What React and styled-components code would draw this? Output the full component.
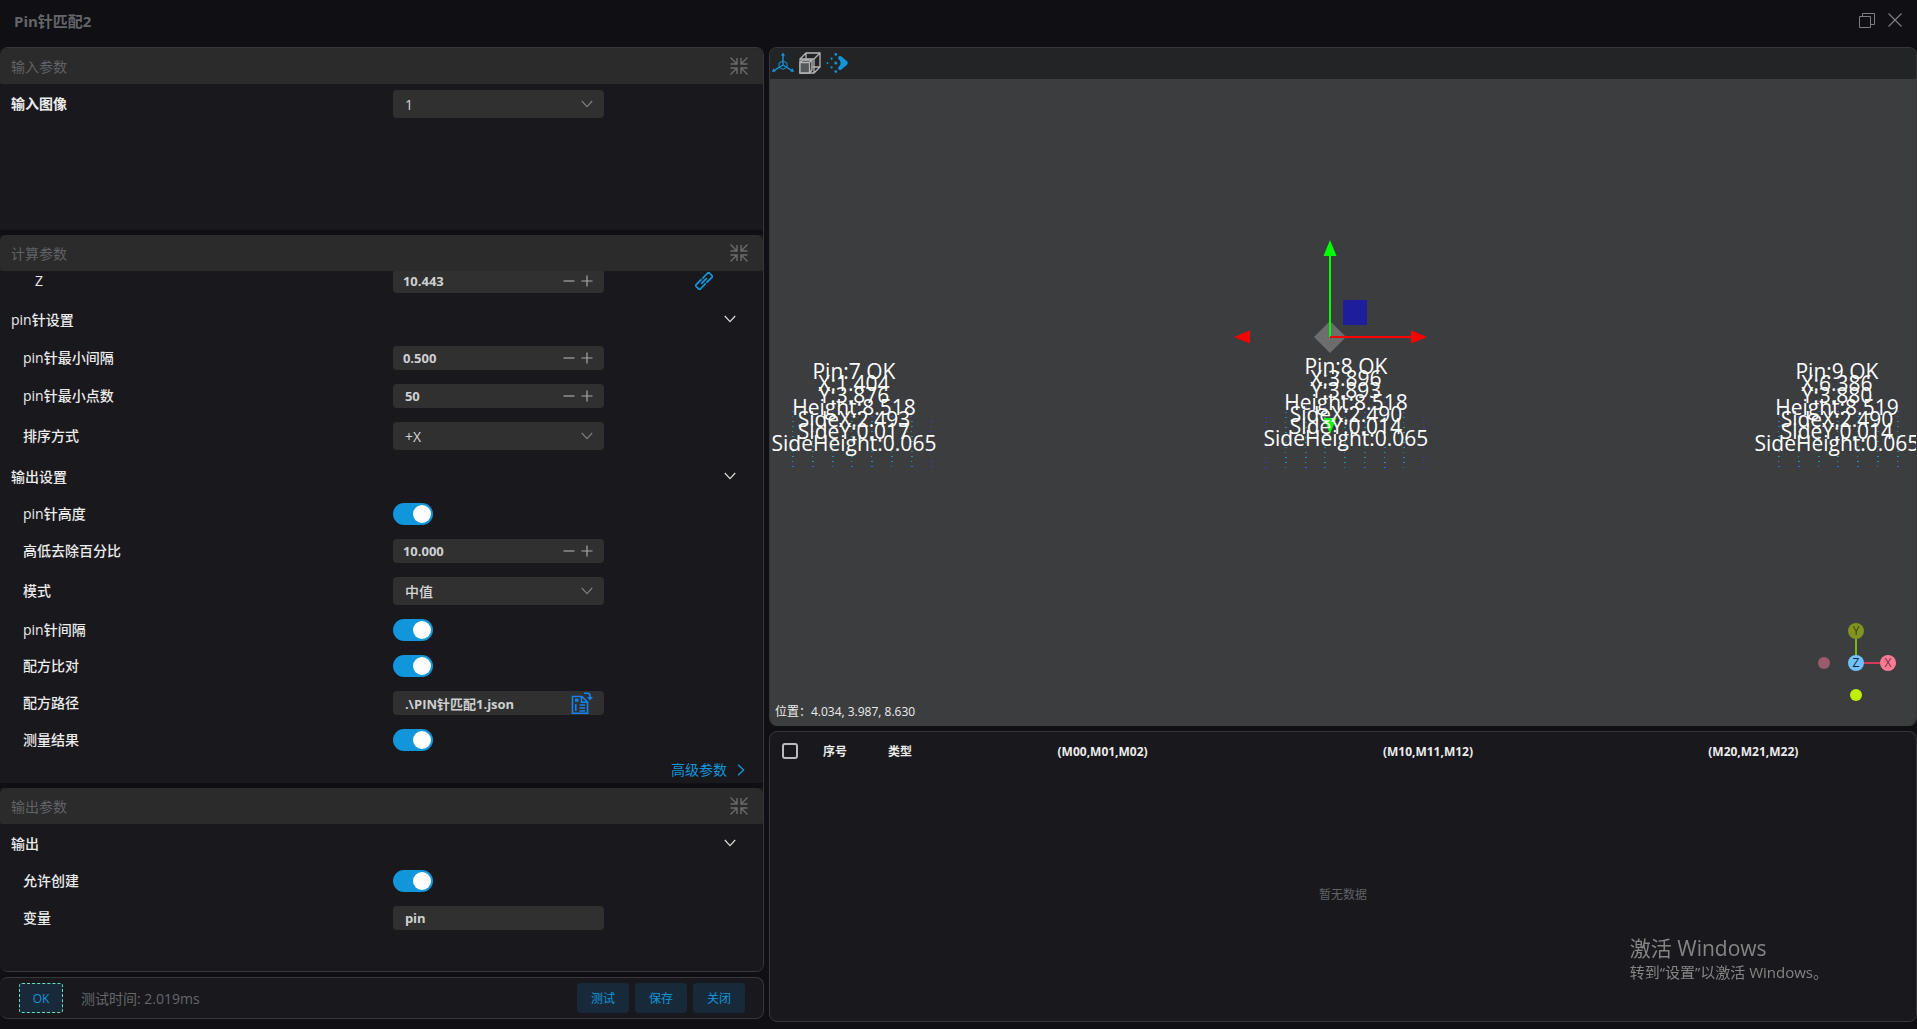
import { useState } from "react";
import styled, { createGlobalStyle } from "styled-components";

const GlobalStyle = createGlobalStyle`
  * {
    box-sizing: border-box;
  }
  body {
    margin: 0;
    background-color: #0f0f14;
    color: #ececec;
    font-family: "Open Sans", "Noto Sans CJK SC", sans-serif;
    font-size: 14px;
  }
  button, input, select {
    font-family: inherit;
  }
`;

const Page = styled.div`
  height: 100vh;
  display: flex;
  flex-direction: column;
  overflow: hidden;
`;
const TitleBar = styled.header`
  height: 47px;
  padding: 0 14px 7px;
  display: flex;
  align-items: center;
  justify-content: space-between;
`;
const Title = styled.h1`
  margin: 0;
  font-size: 15px;
  font-weight: 700;
  color: #646669;
`;
const WindowButtons = styled.div`
  display: flex;
  gap: 12px;
`;
const IconButton = styled.button`
  display: flex;
  padding: 0;
  border: none;
  background: none;
  color: ${(props) => props.$color || "#7d7e80"};
  cursor: pointer;
`;
const Main = styled.main`
  flex: 1;
  min-height: 0;
  display: grid;
  grid-template-columns: 39.85% 1fr;
  gap: 5px;
`;
const Column = styled.div`
  min-width: 0;
  min-height: 0;
  display: flex;
  flex-direction: column;
  gap: 5px;
`;
const LeftColumn = styled(Column)`
  padding-bottom: 10px;
`;
const RightColumn = styled(Column)`
  padding-bottom: 7px;
`;

// parameters
const Stack = styled.div`
  flex: 1;
  min-height: 0;
  display: flex;
  flex-direction: column;
  gap: 5px;
  border: 1px solid #38383c;
  border-left: none;
  border-radius: 8px;
  overflow: hidden;
`;
const Section = styled.section`
  flex: ${(props) => props.$grow} 1 0;
  min-height: 0;
  display: flex;
  flex-direction: column;
  background-color: #19181d;
`;
const SectionHeader = styled.div`
  height: 36px;
  flex-shrink: 0;
  padding: 0 15px 0 11px;
  display: flex;
  align-items: center;
  justify-content: space-between;
  border-radius: 6px 6px 2px 2px;
  background-color: #2b2b2b;
`;
const SectionTitle = styled.h2`
  margin: 0;
  font-size: 14px;
  font-weight: 400;
  color: #606266;
`;
const SectionBody = styled.div`
  flex: 1;
  min-height: 0;
  overflow: hidden;
  padding-top: ${(props) => props.$top || 0}px;
`;
const Rows = styled.div`
  display: flex;
  flex-direction: column;
  gap: 14px;
  margin-top: ${(props) => (props.$scrolled ? "-2px" : "0")};
`;
const Row = styled.div`
  display: grid;
  grid-template-columns: 51.5% 27.7% 1fr;
  align-items: center;
`;
const Label = styled.label`
  padding-left: ${(props) => 11 + (props.$level || 0) * 12}px;
  line-height: 20px;
  font-weight: ${(props) => (props.$strong ? 700 : 500)};
`;
const GroupHeader = styled.div`
  height: 25px;
  padding: 0 27px 2px 11px;
  display: flex;
  align-items: center;
  justify-content: space-between;
  font-weight: 500;
`;
const Field = styled.div`
  position: relative;
  height: ${(props) => (props.$tall ? 28 : 24)}px;
  display: flex;
  align-items: center;
  gap: 6px;
  padding-right: ${(props) => (props.$tall ? 0 : 11)}px;
  border-radius: 4px;
  background-color: #303031;
`;
const TextInput = styled.input`
  flex: 1;
  min-width: 0;
  height: 100%;
  padding: 0 0 0 ${(props) => props.$indent || 10}px;
  border: none;
  outline: none;
  background: none;
  color: #cfd0d2;
  font-size: 13px;
  font-weight: 700;
`;
const SelectInput = styled.select`
  width: 100%;
  height: 100%;
  padding: 0 30px 0 12px;
  border: none;
  border-radius: 4px;
  outline: none;
  appearance: none;
  background: none;
  color: #d6d6d8;
  font-size: 14px;
  font-weight: 500;

  option {
    background-color: #303031;
  }
`;
const SelectArrow = styled.span`
  position: absolute;
  right: 11px;
  display: flex;
  color: #7c7d80;
  pointer-events: none;
`;
const SwitchInput = styled.input`
  width: 40px;
  height: 22px;
  margin: 0;
  padding: 2px;
  appearance: none;
  display: flex;
  justify-content: flex-end;
  border-radius: 11px;
  background-color: #1296db;
  cursor: pointer;

  &::after {
    content: "";
    width: 18px;
    height: 18px;
    border-radius: 50%;
    background-color: #fff;
  }
  &:not(:checked) {
    justify-content: flex-start;
    background-color: #4c4d4f;
  }
`;
const LinkCell = styled.div`
  padding-left: 91px;
  display: flex;
`;
const Advanced = styled.a`
  align-self: flex-end;
  margin: -5px 18px 0 0;
  display: flex;
  align-items: center;
  gap: 10px;
  line-height: 20px;
  color: #1296db;
  text-decoration: none;
`;

// footer
const Footer = styled.footer`
  height: 42px;
  padding: 0 18px 0 19px;
  display: flex;
  align-items: center;
  gap: 6px;
  border: 1px solid #38383c;
  border-left: none;
  border-radius: 8px;
  background-color: #19181d;
`;
const Status = styled.span`
  width: 44px;
  height: 30px;
  display: flex;
  align-items: center;
  justify-content: center;
  border: 1px dashed #67e0bd;
  border-radius: 3px;
  background-color: #182a39;
  color: #1296db;
  font-size: 12px;
`;
const TestTime = styled.span`
  flex: 1;
  padding-left: 12px;
  color: #66676b;
`;
const ActionButton = styled.button`
  width: 52px;
  height: 30px;
  padding: 0;
  border: none;
  border-radius: 4px;
  background-color: #182a39;
  color: #1296db;
  font-size: 12px;
  cursor: pointer;
`;

// viewer
const Viewer = styled.section`
  flex: 680 1 0;
  min-height: 0;
  display: flex;
  flex-direction: column;
  border: 1px solid #38383c;
  border-bottom: none;
  border-radius: 8px;
  overflow: hidden;
`;
const Toolbar = styled.div`
  height: 31px;
  flex-shrink: 0;
  padding: 0 2px 2px;
  display: flex;
  align-items: center;
  gap: 5px;
  background-color: #222425;
`;
const Canvas = styled.div`
  position: relative;
  flex: 1;
  min-height: 0;
  overflow: hidden;
  background-color: #3c3d3f;
`;
const Scene = styled.svg`
  position: absolute;
  top: 0;
  left: 50%;
  overflow: visible;
`;
const PinLabel = styled.div`
  position: absolute;
  top: ${(props) => props.$y}px;
  left: calc(50% + ${(props) => props.$x - 100}px);
  width: 200px;
  text-align: center;
  white-space: nowrap;
  font-size: 21px;
  line-height: 12px;
  color: #fff;
`;
const Orientation = styled.svg`
  position: absolute;
  right: 15px;
  bottom: 16px;
`;
const Position = styled.div`
  position: absolute;
  left: 5px;
  bottom: 6px;
  font-size: 12px;
  line-height: 16px;
`;

// matrix table
const TablePanel = styled.section`
  flex: 290 1 0;
  min-height: 0;
  border: 1px solid #38383c;
  border-radius: 8px;
  background-color: #19181d;
`;
const Table = styled.table`
  width: 100%;
  table-layout: fixed;
  border-collapse: collapse;
  font-size: 12px;
`;
const Th = styled.th`
  width: ${(props) => props.$width || "auto"};
  height: 39px;
  padding: 0;
  font-weight: 700;
  text-align: center;
`;
const CheckBox = styled.input`
  width: 16px;
  height: 16px;
  margin: 0 0 0 12px;
  display: block;
  appearance: none;
  border: 2px solid #b9bbbe;
  border-radius: 3px;

  &:checked {
    background-color: #1296db;
  }
`;
const Empty = styled.td`
  height: 246px;
  padding: 0;
  text-align: center;
  color: #606266;
`;
const Watermark = styled.div`
  position: fixed;
  right: 89px;
  bottom: 46px;
  color: #858587;
  pointer-events: none;
`;
const WatermarkTitle = styled.div`
  font-size: 21px;
  line-height: 26px;
`;
const WatermarkText = styled.div`
  font-size: 15px;
  line-height: 22px;
`;

const CompressIcon = () => (
  <svg width="18" height="18" viewBox="0 0 18 18" fill="none" stroke="#6a6b6d" strokeWidth="1.4">
    <path d="M0.5 0.5L7 7M7 1v6H0.5M17.5 0.5L11 7M11 1v6h6.5M0.5 17.5L7 11M7 17v-6H0.5M17.5 17.5L11 11M11 17v-6h6.5" />
  </svg>
);
const ChevronIcon = () => (
  <svg width="12" height="8" viewBox="0 0 12 8" fill="none" stroke="currentColor" strokeWidth="1.2">
    <path d="M0.8 1L6 6.6L11.2 1" />
  </svg>
);
const MinusIcon = () => (
  <svg width="12" height="12" viewBox="0 0 12 12" stroke="currentColor" strokeWidth="1.2">
    <path d="M0.5 6h11" />
  </svg>
);
const PlusIcon = () => (
  <svg width="12" height="12" viewBox="0 0 12 12" stroke="currentColor" strokeWidth="1.2">
    <path d="M0.5 6h11M6 0.5v11" />
  </svg>
);
const ChainIcon = () => (
  <svg width="18" height="18" viewBox="0 0 18 18" fill="none" stroke="#1296db" strokeWidth="1.8">
    <g transform="rotate(-45 9 9)">
      <path d="M5 9h8" />
      <path d="M7.6 7V6H-0.4v6h8v-1M10.4 7V6h8v6h-8v-1" />
    </g>
  </svg>
);
const FileIcon = () => (
  <svg width="22" height="22" viewBox="0 0 22 22" fill="none" stroke="#1283f0" strokeWidth="1.6">
    <path d="M1.5 4.5h9.5l5.5 5.5v11.2H1.5zM10.5 4.8v5.4h6" />
    <path d="M4 7.5h3.5M4 9h3.5M4.8 12v7M8.5 13h5.5M8.5 16h5.5M8.5 19h5.5" />
    <path d="M13 1.2h3.5q2.5 0 2.5 2.6v2" />
    <path d="M16 5h6l-3 3.6z" fill="#1283f0" stroke="none" />
  </svg>
);
const AxesIcon = () => (
  <svg width="22" height="22" viewBox="0 0 22 22" fill="none" stroke="#1296db" strokeWidth="1.4">
    <path d="M11 2v11M11 13L2 18.6M11 13l9 5.6" />
    <path d="M11 9l4 2v4.2l-4 2.2-4-2.2V11z" strokeWidth="1" />
    <path d="M11 0.5l2 3.2H9zM0 20l1.4-3.8 2.4 3.4zM22 20l-1.4-3.8-2.4 3.4z" fill="#1296db" stroke="none" />
  </svg>
);
const CubeIcon = () => (
  <svg width="22" height="22" viewBox="0 0 22 22" fill="none" stroke="#b4b5b6" strokeWidth="1.3">
    <path d="M1 7l6-6h14v14l-6 6H1zM1 7h14v14M15 7l6-6M7 1v7M13.5 15H21" />
    <path d="M1 10.5h9.5V21H1zM1 10.5L3.5 8h9.5l-2.5 2.5M13 8v10l-2.5 3" fill="#55585a" />
  </svg>
);
const PointsIcon = () => (
  <svg width="22" height="22" viewBox="0 0 22 22" fill="#1296db">
    <circle cx="1.5" cy="11" r="0.9" />
    <circle cx="5.6" cy="6.6" r="1.1" />
    <circle cx="5.6" cy="15.4" r="1.1" />
    <circle cx="9.8" cy="2.4" r="1.3" />
    <circle cx="9.8" cy="11" r="1.5" />
    <circle cx="9.8" cy="19.6" r="1.3" />
    <path d="M12.2 5.2a2 2 0 0 1 3.2-.7l5.4 4.6a2.4 2.4 0 0 1 0 3.8l-5.4 4.6a2 2 0 0 1-3.2-.8c-.4-1.2.6-2.2 1.6-3.2 1-1 1-3.6 0-5-1-1-2-2.1-1.6-3.3z" />
  </svg>
);

const GroupTitle = ({ children }) => (
  <GroupHeader>
    <span>{children}</span>
    <IconButton $color="#dcdcdc" aria-label="toggle">
      <ChevronIcon />
    </IconButton>
  </GroupHeader>
);

const NumberRow = ({ id, label, level = 1, value, indent, children }) => (
  <Row>
    <Label htmlFor={id} $level={level}>
      {label}
    </Label>
    <Field>
      <TextInput id={id} defaultValue={value} $indent={indent} />
      <IconButton $color="#a6a7a9" aria-label="minus">
        <MinusIcon />
      </IconButton>
      <IconButton $color="#a6a7a9" aria-label="plus">
        <PlusIcon />
      </IconButton>
    </Field>
    {children}
  </Row>
);

const SelectRow = ({ id, label, level = 1, strong, options }) => (
  <Row>
    <Label htmlFor={id} $level={level} $strong={strong}>
      {label}
    </Label>
    <Field $tall>
      <SelectInput id={id}>
        {options.map((option) => (
          <option key={option}>{option}</option>
        ))}
      </SelectInput>
      <SelectArrow>
        <ChevronIcon />
      </SelectArrow>
    </Field>
  </Row>
);

const SwitchRow = ({ id, label }) => {
  const [checked, setChecked] = useState(true);
  return (
    <Row>
      <Label htmlFor={id} $level={1}>
        {label}
      </Label>
      <SwitchInput
        id={id}
        type="checkbox"
        checked={checked}
        onChange={() => setChecked(!checked)}
      />
    </Row>
  );
};

const ParamSection = ({ title, grow, top, children }) => (
  <Section $grow={grow}>
    <SectionHeader>
      <SectionTitle>{title}</SectionTitle>
      <IconButton aria-label="collapse">
        <CompressIcon />
      </IconButton>
    </SectionHeader>
    <SectionBody $top={top}>{children}</SectionBody>
  </Section>
);

// x is measured from the middle of the canvas
const pins = [
  {
    x: -489,
    y: 286,
    lines: ["Pin:7 OK", "X:1.404", "Y:3.876", "Height:8.518", "SideX:2.493", "SideY:0.017", "SideHeight:0.065"],
    dots: { x: -551, count: 8, y: 322, rows: 14 },
  },
  {
    x: 3,
    y: 281,
    lines: ["Pin:8 OK", "X:3.896", "Y:3.893", "Height:8.518", "SideX:2.490", "SideY:0.014", "SideHeight:0.065"],
    dots: { x: -78, count: 9, y: 318, rows: 15, fadeStart: true },
  },
  {
    x: 494,
    y: 286,
    lines: ["Pin:9 OK", "X:6.386", "Y:3.880", "Height:8.519", "SideX:2.490", "SideY:0.014", "SideHeight:0.065"],
    dots: { x: 435, count: 8, y: 322, rows: 14 },
  },
];
const rampColors = ["#5b2bb0", "#2b5fd8", "#2382a8", "#2a96a8", "#2a96a8", "#2382a8", "#2590b8", "#2070e8"];

const PointCloud = ({ x, y, count, rows, fadeStart }) => (
  <g>
    {Array.from({ length: count }, (_, col) =>
      Array.from({ length: rows }, (_, row) => {
        const edge = col === count - 1 || (fadeStart && col === 0);
        if (edge && (row < 3 || row % 4 === 3)) return null;
        return (
          <rect
            key={`${col}-${row}`}
            x={x + Math.round(col * 19.75)}
            y={y + row * 5}
            width={(row + col) % 3 ? 2 : 1}
            height="1"
            fill={edge ? "#5030b8" : rampColors[Math.floor((row * 8) / rows)]}
          />
        );
      })
    )}
  </g>
);

const App = () => {
  return (
    <Page>
      <GlobalStyle />
      <TitleBar>
        <Title>Pin针匹配2</Title>
        <WindowButtons>
          <IconButton aria-label="restore">
            <svg width="16" height="16" viewBox="0 0 16 16" fill="none" stroke="currentColor">
              <path d="M0.5 4.5h11v11H0.5zM3.5 4.5v-3h12v11h-4" />
            </svg>
          </IconButton>
          <IconButton aria-label="close">
            <svg width="16" height="16" viewBox="0 0 16 16" fill="none" stroke="currentColor" strokeWidth="1.2">
              <path d="M1.5 1.5l13 13M14.5 1.5l-13 13" />
            </svg>
          </IconButton>
        </WindowButtons>
      </TitleBar>
      <Main>
        <LeftColumn>
          <Stack>
            <ParamSection title="输入参数" grow={182} top={6}>
              <SelectRow id="image" label="输入图像" level={0} strong options={["1"]} />
            </ParamSection>
            <ParamSection title="计算参数" grow={548}>
              <Rows $scrolled>
                <NumberRow id="z" label="Z" level={2} value="10.443">
                  <LinkCell>
                    <IconButton aria-label="link">
                      <ChainIcon />
                    </IconButton>
                  </LinkCell>
                </NumberRow>
                <GroupTitle>pin针设置</GroupTitle>
                <NumberRow id="gap" label="pin针最小间隔" value="0.500" />
                <NumberRow id="points" label="pin针最小点数" value="50" indent={12} />
                <SelectRow id="sort" label="排序方式" options={["+X"]} />
                <GroupTitle>输出设置</GroupTitle>
                <SwitchRow id="height" label="pin针高度" />
                <NumberRow id="percent" label="高低去除百分比" value="10.000" />
                <SelectRow id="mode" label="模式" options={["中值"]} />
                <SwitchRow id="interval" label="pin针间隔" />
                <SwitchRow id="compare" label="配方比对" />
                <Row>
                  <Label htmlFor="path" $level={1}>
                    配方路径
                  </Label>
                  <Field>
                    <TextInput id="path" defaultValue=".\PIN针匹配1.json" $indent={12} />
                    <IconButton aria-label="open">
                      <FileIcon />
                    </IconButton>
                  </Field>
                </Row>
                <SwitchRow id="result" label="测量结果" />
                <Advanced href="#advanced">
                  高级参数
                  <svg width="8" height="12" viewBox="0 0 8 12" fill="none" stroke="currentColor" strokeWidth="1.4">
                    <path d="M1 0.8L6.6 6L1 11.2" />
                  </svg>
                </Advanced>
              </Rows>
            </ParamSection>
            <ParamSection title="输出参数" grow={183} top={7}>
              <Rows>
                <GroupTitle>输出</GroupTitle>
                <SwitchRow id="create" label="允许创建" />
                <Row>
                  <Label htmlFor="variable" $level={1}>
                    变量
                  </Label>
                  <Field>
                    <TextInput id="variable" defaultValue="pin" $indent={12} />
                  </Field>
                </Row>
              </Rows>
            </ParamSection>
          </Stack>
          <Footer>
            <Status>OK</Status>
            <TestTime>测试时间: 2.019ms</TestTime>
            <ActionButton>测试</ActionButton>
            <ActionButton>保存</ActionButton>
            <ActionButton>关闭</ActionButton>
          </Footer>
        </LeftColumn>
        <RightColumn>
          <Viewer>
            <Toolbar>
              <IconButton aria-label="axes">
                <AxesIcon />
              </IconButton>
              <IconButton aria-label="box">
                <CubeIcon />
              </IconButton>
              <IconButton aria-label="points">
                <PointsIcon />
              </IconButton>
            </Toolbar>
            <Canvas>
              <Scene width="1" height="1">
                {pins.map((pin) => (
                  <PointCloud key={pin.x} {...pin.dots} />
                ))}
                <path d="M-13 242l16 16l-16 16l-16 -16z" fill="#6d6d6e" />
                <rect x="0" y="221" width="24" height="25" fill="#1e1e9c" />
                <path d="M-13 258V176" stroke="#00ff00" strokeWidth="2" />
                <path d="M-13 161l6.5 16h-13zM-13 355l6.5 -16h-13z" fill="#00ff00" />
                <path d="M-13 258H69" stroke="#ff0000" strokeWidth="2" />
                <path d="M84 258l-16 -6.5v13zM-109 258l16 -6.5v13z" fill="#ff0000" />
              </Scene>
              {pins.map((pin) => (
                <PinLabel key={pin.x} $x={pin.x} $y={pin.y}>
                  {pin.lines.map((line) => (
                    <div key={line}>{line}</div>
                  ))}
                </PinLabel>
              ))}
              <Orientation width="90" height="92" viewBox="0 0 90 92" fontSize="12" textAnchor="middle">
                <path d="M45 13v32" stroke="#7eb516" strokeWidth="2" />
                <path d="M45 45h32" stroke="#d8395a" strokeWidth="2" />
                <circle cx="13" cy="45" r="6" fill="#9a5c6b" />
                <circle cx="45" cy="77" r="6" fill="#c1ee00" />
                <circle cx="45" cy="13" r="8" fill="#82931f" />
                <circle cx="77" cy="45" r="8" fill="#ff7b93" />
                <circle cx="45" cy="45" r="8" fill="#6fc1ff" />
                <text x="45" y="17" fill="#3b4310">Y</text>
                <text x="77" y="49" fill="#6b2f3b">X</text>
                <text x="45" y="49" fill="#10222f">Z</text>
              </Orientation>
              <Position>位置：4.034, 3.987, 8.630</Position>
            </Canvas>
          </Viewer>
          <TablePanel>
            <Table>
              <thead>
                <tr>
                  <Th $width="40px">
                    <CheckBox type="checkbox" aria-label="select all" />
                  </Th>
                  <Th $width="50px">序号</Th>
                  <Th $width="80px">类型</Th>
                  <Th>(M00,M01,M02)</Th>
                  <Th>(M10,M11,M12)</Th>
                  <Th>(M20,M21,M22)</Th>
                </tr>
              </thead>
              <tbody>
                <tr>
                  <Empty colSpan={6}>暂无数据</Empty>
                </tr>
              </tbody>
            </Table>
          </TablePanel>
        </RightColumn>
      </Main>
      <Watermark>
        <WatermarkTitle>激活 Windows</WatermarkTitle>
        <WatermarkText>转到“设置”以激活 Windows。</WatermarkText>
      </Watermark>
    </Page>
  );
};

export default App;
